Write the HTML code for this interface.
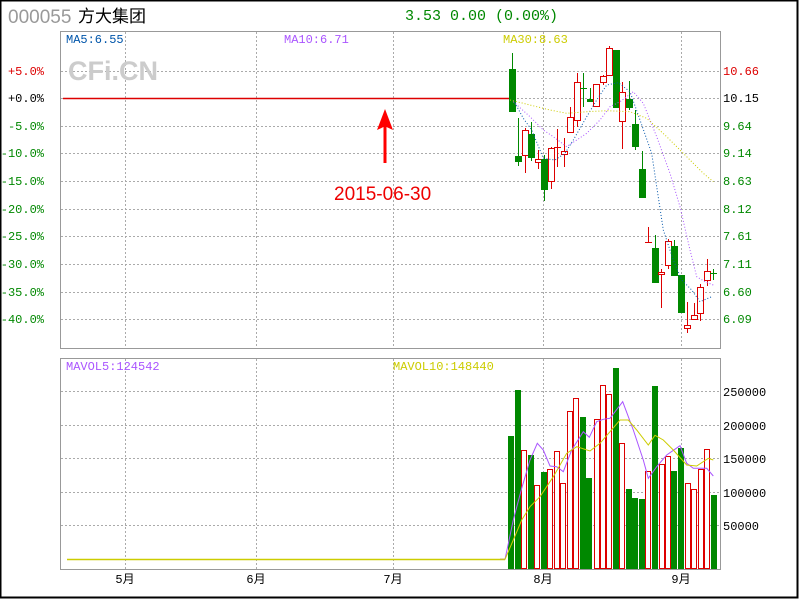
<!DOCTYPE html>
<html><head><meta charset="utf-8"><style>
html,body{margin:0;padding:0;background:#fff;}
svg{display:block;}
text{font-family:"Liberation Mono","Noto Sans CJK SC",monospace;font-size:12px;}
</style></head><body>
<svg id="s" width="800" height="600" xmlns="http://www.w3.org/2000/svg">
<rect x="0.5" y="0.5" width="797" height="597" fill="#fff" stroke="#000" stroke-width="2"/>
<text x="8" y="23" style="font-family:'Liberation Sans',sans-serif;font-size:19px" fill="#999">000055</text>
<text x="78" y="22" style="font-family:'Liberation Sans','Noto Sans CJK SC',sans-serif;font-size:17px" fill="#000">方大集团</text>
<text x="405" y="20" style="font-size:15px" fill="#080">3.53 0.00 (0.00%)</text>
<g id="grid" stroke="#aaa" stroke-dasharray="2,2" stroke-width="1"></g>
<rect x="60.5" y="31.5" width="660" height="317" fill="none" stroke="#999"/>
<rect x="60.5" y="358.5" width="660" height="211" fill="none" stroke="#999"/>
<text x="68" y="80" style="font-family:'Liberation Sans',sans-serif;font-size:27px;font-weight:bold" fill="#ccc">CFi.CN</text>
<text x="66" y="43" fill="#05a">MA5:6.55</text>
<text x="284" y="43" fill="#a5f">MA10:6.71</text>
<text x="503" y="43" fill="#cc0">MA30:8.63</text>
<text x="66" y="370" fill="#a5f">MAVOL5:124542</text>
<text x="393" y="370" fill="#cc0">MAVOL10:148440</text>
<line x1="63" y1="98.5" x2="511" y2="98.5" stroke="#d00" stroke-width="1.5"/>
<polygon points="385,109 377,130 383.5,127 383.5,163 386.5,163 386.5,127 393,130" fill="#f00"/>
<text x="334" y="200" style="font-family:'Liberation Sans',sans-serif;font-size:19px" fill="#e00">2015-06-30</text>
<line x1="67" y1="559.5" x2="505" y2="559.5" stroke="#cc0" stroke-width="1.5"/>
<g id="c"></g>
<g id="lab"></g>
</svg>
<script>
var NS="http://www.w3.org/2000/svg",S=document.getElementById('s');
function el(t,a,p){var e=document.createElementNS(NS,t);for(var k in a)e.setAttribute(k,a[k]);(p||S).appendChild(e);return e;}
var G=document.getElementById('grid');
[125,256,393,543,681].forEach(function(x){el('line',{x1:x+.5,y1:32,x2:x+.5,y2:348},G);el('line',{x1:x+.5,y1:359,x2:x+.5,y2:569},G);});
var hy=[71,98,126,153,181,209,236,264,292,319];
hy.forEach(function(y){el('line',{x1:61,y1:y+.5,x2:720,y2:y+.5},G);});
[391,425,458,492,525].forEach(function(y){el('line',{x1:61,y1:y+.5,x2:720,y2:y+.5},G);});
var L=document.getElementById('lab');
var pct=["+5.0%","+0.0%","-5.0%","-10.0%","-15.0%","-20.0%","-25.0%","-30.0%","-35.0%","-40.0%"];
var pr=["10.66","10.15","9.64","9.14","8.63","8.12","7.61","7.11","6.60","6.09"];
hy.forEach(function(y,i){var c=i==0?"#d00":i==1?"#000":"#080";
var t=el('text',{x:44,y:y+4,fill:c,'text-anchor':'end'},L);t.textContent=pct[i];
t=el('text',{x:723,y:y+4,fill:c},L);t.textContent=pr[i];});
[["250000",391],["200000",425],["150000",458],["100000",492],["50000",525]].forEach(function(a){var t=el('text',{x:723,y:a[1]+5,fill:'#000'},L);t.textContent=a[0];});
[["5月",125],["6月",256],["7月",393],["8月",543],["9月",681]].forEach(function(a){var t=el('text',{x:a[1],y:583,fill:'#000','text-anchor':'middle'},L);t.textContent=a[0];});
var C=document.getElementById('c');
// [color, bodyTop, bodyBot, wickTop, wickBot]
var k=[["g",69,112,53,112],["g",156,162,118,166],["r",130,156,128,173],["g",134,158,122,161],["r",159,163,150,169],["g",159,190,155,201],["r",148,182,147,189],["r",147,148,129,167],["r",151,155,138,167],["r",117,133,107,133],["r",82,121,73,127],["g",88,89,73,107],["g",99,102,88,102],["r",84,107,84,107],["r",76,83,75,85],["r",48,76,46,76],["g",50,108,50,108],["r",92,122,82,149],["g",99,108,81,110],["g",124,147,110,150],["g",169,198,151,198],["r",242,243,227,243],["g",248,283,235,283],["r",272,275,269,308],["r",241,266,239,269],["g",246,276,240,276],["g",275,313,275,313],["r",325,329,302,333],["r",315,320,303,320],["r",287,314,284,321],["r",271,281,259,286],["g",273,274,269,280]];
var vol=[436,390,450,455,485,472,469,451,483,411,398,417,478,419,385,394,368,443,489,498,499,471,386,464,456,471,448,483,489,469,449,495];
var vc=["g","g","r","g","r","g","r","r","r","r","r","g","g","r","r","r","g","r","g","g","g","r","g","r","r","g","g","r","r","r","r","g"];
for(var i=0;i<32;i++){var x=Math.round(511.7+i*6.5),d=k[i];
var col=d[0]=="r"?"#d00":"#080";
el('line',{x1:x+.5,y1:d[3],x2:x+.5,y2:d[4],stroke:col},C);
var h=Math.max(d[2]-d[1],1);
if(d[0]=="r"&&h>2)el('rect',{x:x-2.5,y:d[1]+.5,width:6,height:h-1,fill:'#fff',stroke:col},C);
else el('rect',{x:x-3,y:d[1],width:7,height:h,fill:col},C);
var vx=Math.round(500+[34,53,72,92,112,131,151,170,190,209,228,248,268,290,308,327,347,366,386,406,425,445,465,485,504,523,543,564,583,603,622,642][i]/3);
if(vc[i]=="r")el('rect',{x:vx-2.5,y:vol[i]+.5,width:5,height:569-vol[i]-1,fill:'#fff',stroke:'#d00'},C);
else el('rect',{x:vx-3,y:vol[i],width:6,height:569-vol[i],fill:'#080'},C);}
function pl(pts,col,ox,oy,dash){var s=pts.map(function(p){return (p[0]/3+ox).toFixed(1)+","+(p[1]/3+oy).toFixed(1)}).join(" ");
var a={points:s,fill:'none',stroke:col,'stroke-width':1};if(dash)a['stroke-dasharray']=dash;el('polyline',a,C);}
pl([[40,210],[70,265],[95,300],[130,385],[165,390],[195,370],[220,330],[260,260],[290,210],[320,165],[355,158],[390,185],[420,270],[455,370],[470,470],[490,600],[520,690],[545,750],[575,780],[600,815],[635,800]],"#05a",500,30,"1,2");
pl([[40,215],[90,260],[130,300],[160,320],[200,350],[230,330],[260,310],[300,270],[330,230],[360,215],[400,185],[430,220],[470,320],[510,430],[540,530],[570,660],[590,740],[615,755],[640,765]],"#a5f",500,30,"1,2");
pl([[30,210],[90,225],[150,240],[200,250],[260,245],[320,242],[390,245],[440,265],[500,320],[560,380],[610,430],[640,455]],"#cc0",500,30,"1,2");
pl([[0,628],[15,628],[40,510],[65,415],[90,330],[112,280],[130,300],[150,348],[170,350],[190,365],[215,300],[250,245],[268,262],[290,215],[310,208],[330,205],[368,155],[400,240],[430,330],[445,385],[470,350],[500,315],[540,287],[560,340],[580,355],[620,355],[640,378]],"#a5f",500,350);
pl([[0,628],[15,628],[40,570],[65,510],[90,470],[120,440],[160,380],[200,310],[230,290],[270,303],[300,280],[330,245],[360,210],[385,210],[410,240],[445,285],[465,256],[490,270],[520,300],[560,345],[590,348],[625,325],[640,330]],"#cc0",500,350);
</script>
</body></html>
